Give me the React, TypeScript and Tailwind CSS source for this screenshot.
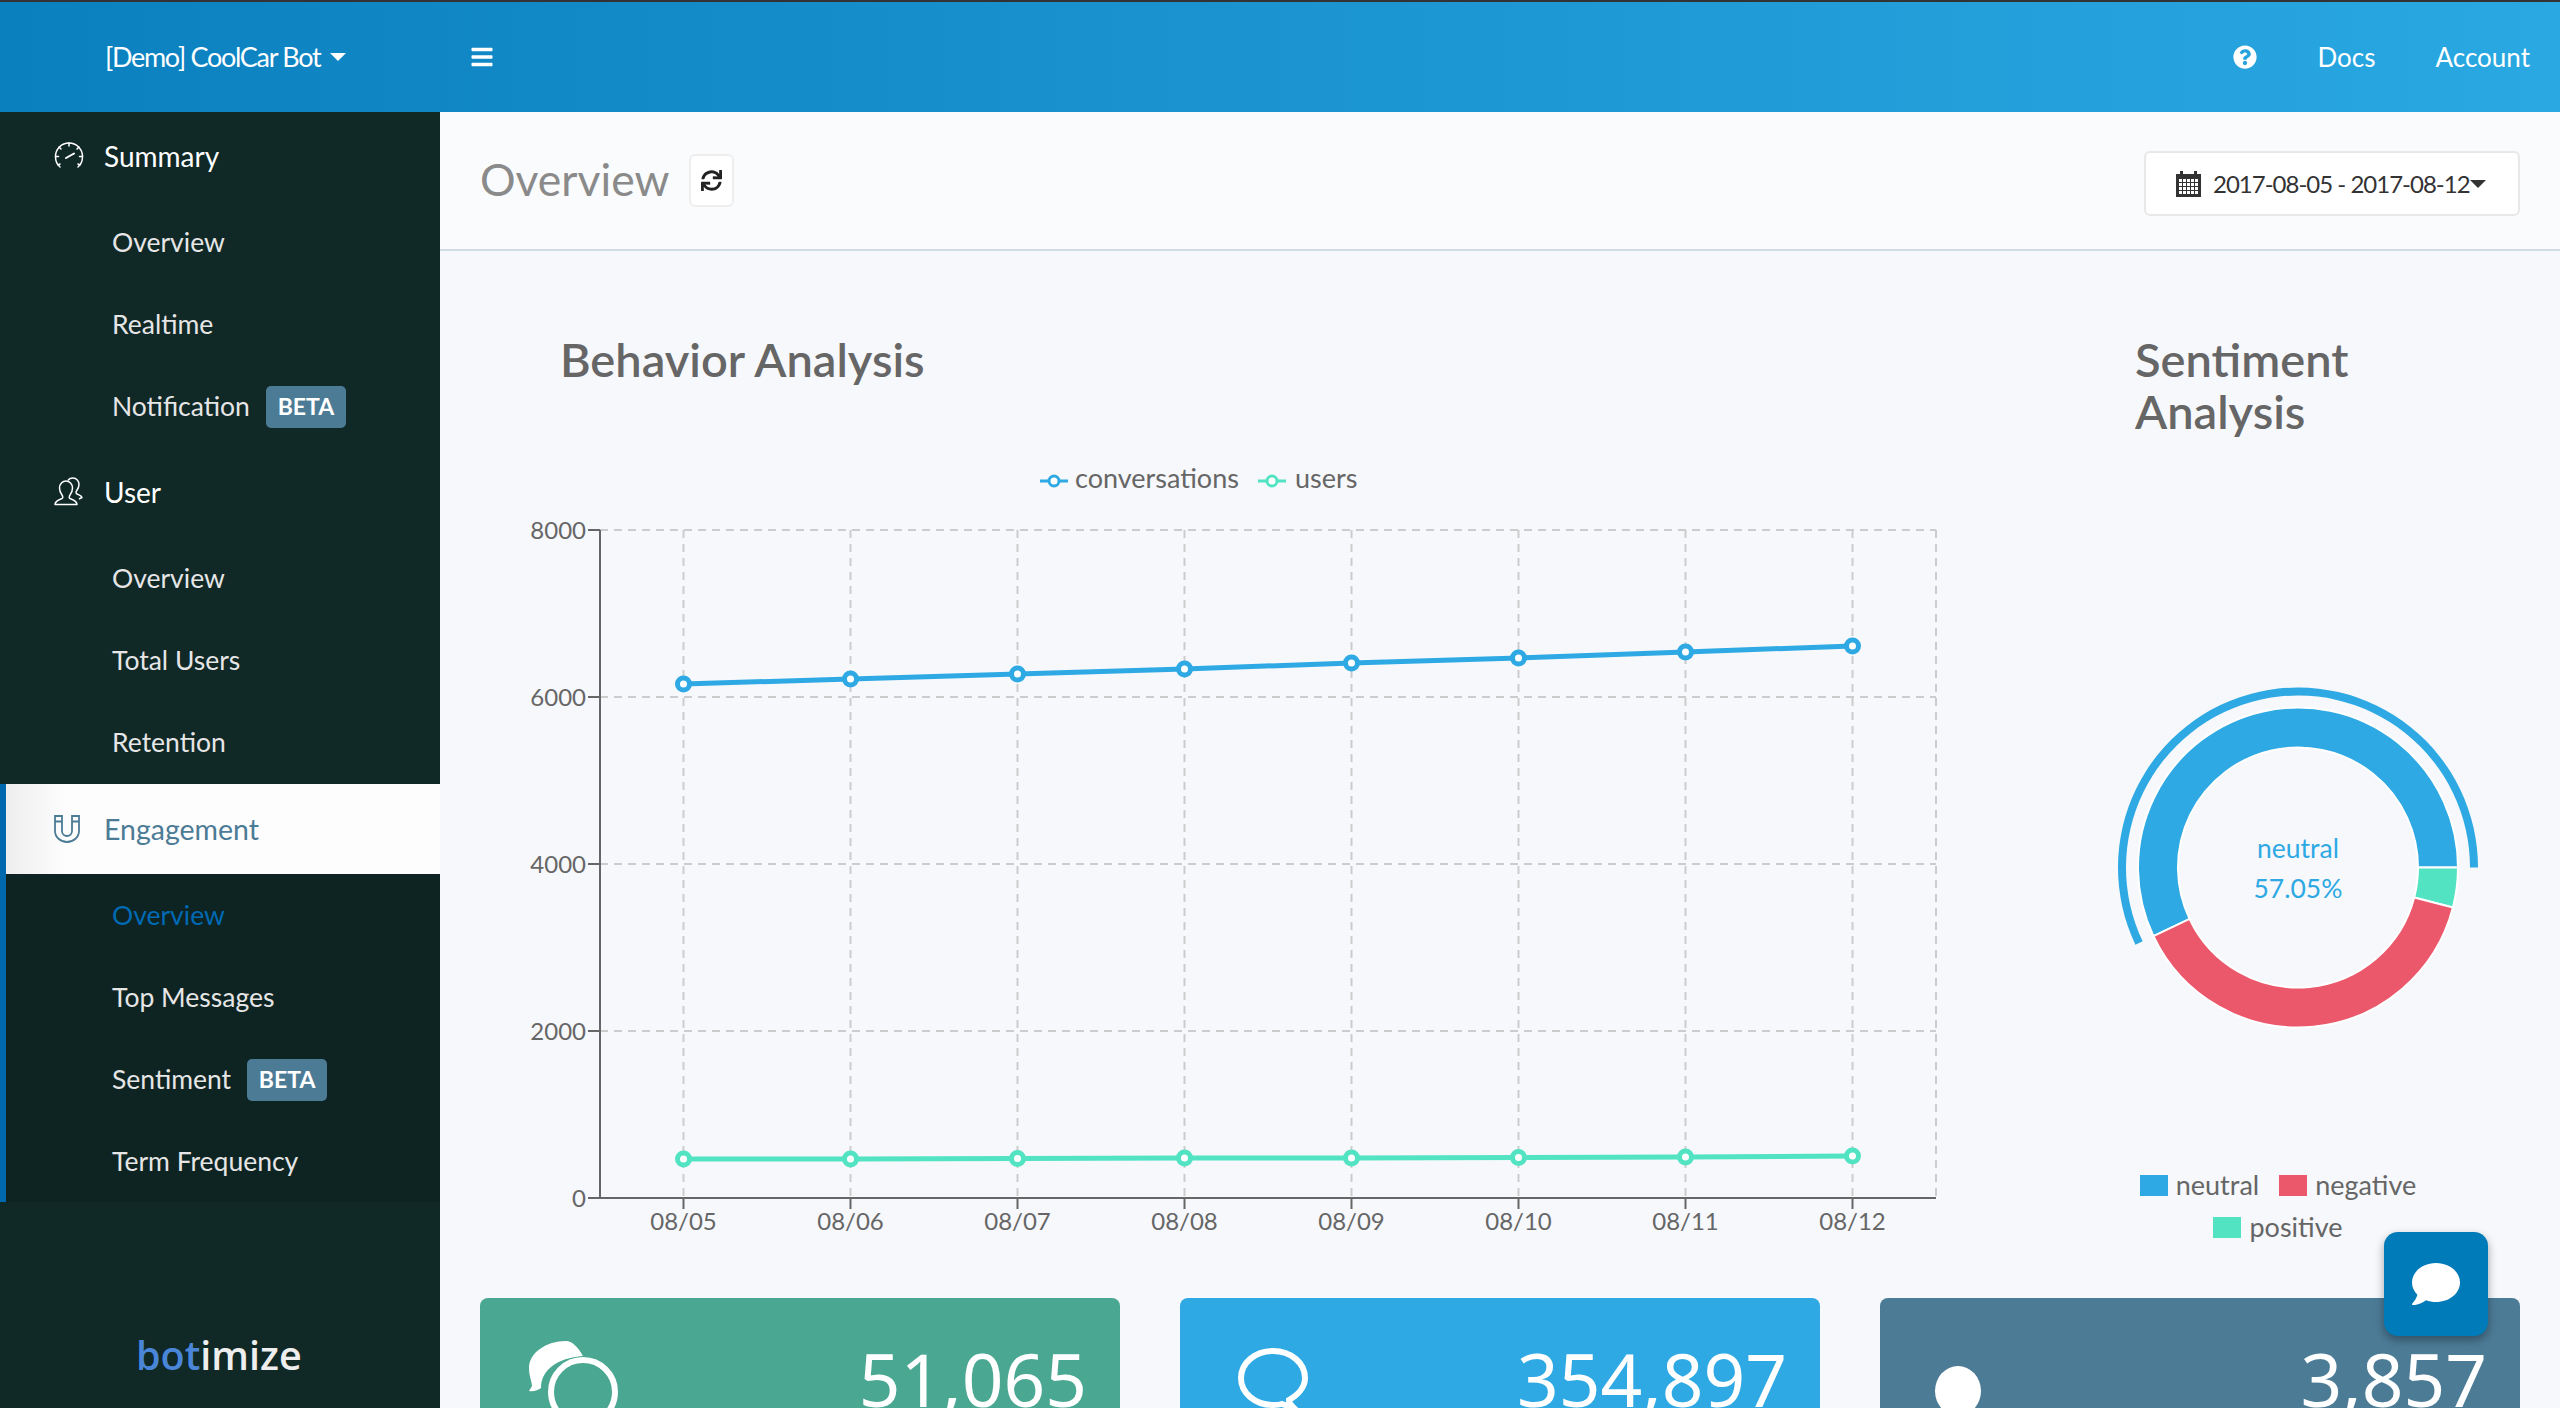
import React from 'react';
import { FaBars, FaComment, FaQuestionCircle, FaSync } from 'react-icons/fa';

const Caret = ({ className }: { className: string }) => (
  <svg viewBox="0 0 16 8" className={className} fill="currentColor">
    <path d="M0 0h16L8 8z" />
  </svg>
);

const GaugeIcon = () => (
  <svg viewBox="0 0 30 30" className="h-[30px] w-[30px] shrink-0" fill="none" stroke="#fff" strokeWidth="1.5" strokeLinecap="round">
    <path d="M6 26C3 23.500 1.500 19.500 1.500 15.500 1.500 8 7.500 2 15 2s13.500 6 13.500 13.500c0 4-1.500 8-4.500 10.500" />
    <path d="M12 17l8-4.500" strokeWidth="2" />
    <path d="M15 2v3M5 6l2 2M25 6l-2 2M1.500 15.500h3M28.500 15.500h-3M4 24l2-1M26 24l-2-1" />
  </svg>
);

const UserIcon = () => (
  <svg viewBox="0 0 30 30" className="h-[30px] w-[30px] shrink-0" fill="none" stroke="#fff" strokeWidth="1.500" strokeLinejoin="round">
    <path d="M1 27.500c0-3 3-4.500 7-6 1-.4 1-2 0-3.500-2-2.500-2.500-4-2.500-7 0-4 3-7 6.500-7s6.500 3 6.500 7c0 3-.5 4.500-2.500 7-1 1.500-1 3.100 0 3.500 4 1.500 7 3 7 6z" />
    <path d="M14 3.500C15 1.500 17 1 19 1c3.500 0 6 3 6 6.500 0 3-1 4.500-2.500 6.500-.8 1.200-.5 2.500.5 3 2 1 4.500 1.500 5 3.500l-3 1.500" />
  </svg>
);

const MagnetIcon = () => (
  <svg viewBox="0 0 26 28" className="h-[28px] w-[26px] shrink-0" fill="none" stroke="#4c7b96" strokeWidth="1.800">
    <path d="M1 1h7v15a5 5 0 0 0 10 0V1h7v15a12 11 0 0 1-24 0z" />
    <path d="M1 6.500h7M18 6.500h7" />
  </svg>
);

const CalendarIcon = () => (
  <svg viewBox="0 0 25 26" className="h-[26px] w-[25px] shrink-0" fill="#333">
    <path d="M0 3h4V0h3v3h11V0h3v3h4v23H0z" />
    {[8, 12, 16, 20].map(y =>
      [3, 7, 11, 15, 19].map(x => <rect key={`${x}-${y}`} x={x} y={y} width="3" height="3" fill="#fff" />)
    )}
  </svg>
);

const Beta = () => (
  <span className="ml-4 flex h-[42px] w-[80px] items-center justify-center rounded-[5px] bg-[#4c7b96] text-[23px] font-bold text-white">
    BETA
  </span>
);

const SubItem = ({ label, beta, active }: { label: string; beta?: boolean; active?: boolean }) => (
  <div className={`flex h-[82px] items-center pl-[112px] pt-px text-[26.5px] ${active ? 'text-[#0069b4]' : 'text-[#e6e6e6]'}`}>
    {label}
    {beta && <Beta />}
  </div>
);

const Section = ({ icon, label }: { icon: React.ReactNode; label: string }) => (
  <div className="flex h-[88px] items-center gap-[20px] pl-[54px] text-[28px] text-white">
    {icon}
    {label}
  </div>
);

const Sidebar = () => (
  <aside className="flex w-[440px] shrink-0 flex-col bg-[#102826]">
    <Section icon={<GaugeIcon />} label="Summary" />
    <div className="py-px">
      <SubItem label="Overview" />
      <SubItem label="Realtime" />
      <SubItem label="Notification" beta />
    </div>
    <Section icon={<UserIcon />} label="User" />
    <div className="py-px">
      <SubItem label="Overview" />
      <SubItem label="Total Users" />
      <SubItem label="Retention" />
    </div>
    <div className="border-l-[6px] border-[#0069ad] bg-[#0e2423]">
      <div className="flex h-[90px] items-center gap-[24px] bg-gradient-to-r from-[#eeeeee] to-[#fdfdfd] to-[14%] pl-[48px] text-[28.5px] text-[#4c7b96]">
        <MagnetIcon />
        Engagement
      </div>
      <div className="-ml-[6px]">
        <SubItem label="Overview" active />
        <SubItem label="Top Messages" />
        <SubItem label="Sentiment" beta />
        <SubItem label="Term Frequency" />
      </div>
    </div>
    <div className="mt-[123px] pl-[136px] font-['Open_Sans',sans-serif] text-[39.5px] font-semibold leading-[60px] text-[#eeeeee]">
      <span className="text-[#4a86d8]">bot</span>imize
    </div>
  </aside>
);

const TopBar = () => (
  <header className="flex h-[112px] shrink-0 items-center border-t-2 border-[#333] bg-gradient-to-r from-[#0a80bf] to-[#29a8e2] text-[26px] text-white">
    <div className="flex w-[470px] items-center pl-[105px] text-[27px] tracking-[-1.3px]">
      [Demo] CoolCar Bot
      <Caret className="ml-[10px] h-[8px] w-[16px]" />
    </div>
    <FaBars className="h-[24px] w-[24px]" />
    <div className="ml-auto flex items-center pr-[30px]">
      <FaQuestionCircle className="mr-[60px] h-[24px] w-[24px]" />
      <span className="mr-[60px]">Docs</span>
      <span>Account</span>
    </div>
  </header>
);

const days = ['08/05', '08/06', '08/07', '08/08', '08/09', '08/10', '08/11', '08/12'];
const xAt = (i: number) => 203.500 + i * 167;
const convY = [244, 239, 234, 229, 223, 218, 212, 206];
const userY = [719, 719, 718.500, 718, 718, 717.500, 717, 716];

const Series = ({ ys, color }: { ys: number[]; color: string }) => (
  <g>
    <polyline points={ys.map((y, i) => `${xAt(i)},${y}`).join(' ')} fill="none" stroke={color} strokeWidth="5" />
    {ys.map((y, i) => (
      <circle key={i} cx={xAt(i)} cy={y} r="6" fill="#fff" stroke={color} strokeWidth="5" />
    ))}
  </g>
);

// axis: x 600 -> svg 120, y 530/1198 -> svg 90/758
const LineChart = () => (
  <svg width="1480" height="800" className="block">
    <g stroke="#cccccc" strokeWidth="2" strokeDasharray="8 6">
      {[90, 257, 424, 591].map(y => <line key={y} x1="120" x2="1456" y1={y} y2={y} />)}
      {days.map((d, i) => <line key={d} x1={xAt(i)} x2={xAt(i)} y1="90" y2="758" />)}
      <line x1="1456" x2="1456" y1="90" y2="758" />
    </g>
    <g stroke="#666" strokeWidth="2">
      <line x1="108" x2="120" y1="90" y2="90" />
      <line x1="108" x2="120" y1="257" y2="257" />
      <line x1="108" x2="120" y1="424" y2="424" />
      <line x1="108" x2="120" y1="591" y2="591" />
      <line x1="108" x2="120" y1="758" y2="758" />
      <line x1="120" x2="120" y1="90" y2="758" />
      <line x1="120" x2="1456" y1="758" y2="758" />
      {days.map((d, i) => <line key={d} x1={xAt(i)} x2={xAt(i)} y1="758" y2="769" />)}
    </g>
    <g fill="#666" fontSize="24" textAnchor="end">
      {[['8000', 90], ['6000', 257], ['4000', 424], ['2000', 591], ['0', 758]].map(([t, y]) => (
        <text key={t} x="106" y={Number(y) + 9}>{t}</text>
      ))}
    </g>
    <g fill="#666" fontSize="24" textAnchor="middle">
      {days.map((d, i) => <text key={d} x={xAt(i)} y="790">{d}</text>)}
    </g>
    <Series ys={convY} color="#2ea9e3" />
    <Series ys={userY} color="#52e3c2" />
    <g>
      <line x1="560" x2="588" y1="41" y2="41" stroke="#2ea9e3" strokeWidth="3" />
      <circle cx="574" cy="41" r="5" fill="#fff" stroke="#2ea9e3" strokeWidth="3" />
      <text x="595" y="48" fill="#666" fontSize="27">conversations</text>
      <line x1="778" x2="806" y1="41" y2="41" stroke="#52e3c2" strokeWidth="3" />
      <circle cx="792" cy="41" r="5" fill="#fff" stroke="#52e3c2" strokeWidth="3" />
      <text x="815" y="48" fill="#666" fontSize="27">users</text>
    </g>
  </svg>
);

const CX = 178;
const CY = 207.500;

const ringPath = (r0: number, r1: number, a0: number, a1: number) => {
  const p = (r: number, a: number) => {
    const t = (a * Math.PI) / 180;
    return `${(CX + r * Math.cos(t)).toFixed(2)} ${(CY + r * Math.sin(t)).toFixed(2)}`;
  };
  const large = Math.abs(a1 - a0) > 180 ? 1 : 0;
  const sweep = a1 > a0 ? 1 : 0;
  return `M${p(r1, a0)}A${r1} ${r1} 0 ${large} ${sweep} ${p(r1, a1)}L${p(r0, a1)}A${r0} ${r0} 0 ${large} ${1 - sweep} ${p(r0, a0)}Z`;
};

const Donut = () => (
  <svg width="400" height="400" className="block overflow-visible">
    <path d={ringPath(172, 180, 0, -205.4)} fill="#2ea9e3" />
    <g stroke="#ffffff" strokeWidth="2">
      <path d={ringPath(120, 160, 0, -205.4)} fill="#2ea9e3" />
      <path d={ringPath(120, 160, 0, 14.5)} fill="#52e3c2" />
      <path d={ringPath(120, 160, 14.5, 154.6)} fill="#ec586b" />
    </g>
    <g fill="#2ea9e3" fontSize="26.5" textAnchor="middle">
      <text x={CX} y="198">neutral</text>
      <text x={CX} y="238">57.05%</text>
    </g>
  </svg>
);

const LegendItem = ({ swatch, label }: { swatch: string; label: string }) => (
  <div className="flex h-[42px] items-center gap-2 text-[27px] text-[#666]">
    <span className={`h-[21px] w-[28px] ${swatch}`} />
    {label}
  </div>
);

const StatCard = ({ bg, value, icon }: { bg: string; value: string; icon: React.ReactNode }) => (
  <div className={`flex h-[200px] flex-1 justify-between rounded-[8px] pr-[33px] text-white ${bg}`}>
    {icon}
    <div className="pt-[45px] font-['Noto_Sans',sans-serif] text-[73px] font-normal leading-[72px]">{value}</div>
  </div>
);

const App: React.FC = () => {
  return (
    <div className="flex h-[1408px] flex-col overflow-hidden bg-[#f6f8fc] font-['Lato',sans-serif]">
      <TopBar />
      <div className="flex min-h-0 flex-1">
        <Sidebar />
        <main className="min-w-0 flex-1">
          <div className="flex h-[139px] items-center border-b-2 border-[#d0dce6] bg-[#fafbfd] px-[40px]">
            <h1 className="-mt-[2px] w-[186px] whitespace-nowrap text-[44.5px] text-[#8a8a8a]">Overview</h1>
            <button className="ml-[23px] flex h-[53px] w-[45px] items-center justify-center rounded-[6px] border-2 border-[#eeeeee] bg-white">
              <FaSync className="h-[21px] w-[21px] text-[#222]" />
            </button>
            <button className="ml-auto mt-[6px] flex h-[65px] w-[376px] items-center whitespace-nowrap rounded-[6px] border-2 border-[#e8e8e8] bg-white pl-[30px] text-[24px] tracking-[-1px] text-[#333]">
              <CalendarIcon />
              <span className="ml-[12px]">2017-08-05 - 2017-08-12</span>
              <Caret className="h-[8px] w-[16px]" />
            </button>
          </div>
          <div className="flex h-[1047px] px-[40px]">
            <section className="w-[1640px] pt-[82px]">
              <h2 className="pl-[80px] text-[47px] font-semibold leading-[52px] text-[#666]">Behavior Analysis</h2>
              <div className="mt-[55px]">
                <LineChart />
              </div>
            </section>
            <section className="pt-[82px]">
              <h2 className="pl-[15px] text-[47px] font-semibold leading-[52px] text-[#666]">
                Sentiment
                <br />
                Analysis
              </h2>
              <div className="mt-[223px]">
                <Donut />
              </div>
              <div className="mt-[104px] flex w-[316px] flex-wrap justify-center gap-x-[20px]">
                <LegendItem swatch="bg-[#2ea9e3]" label="neutral" />
                <LegendItem swatch="bg-[#ec586b]" label="negative" />
                <LegendItem swatch="bg-[#52e3c2]" label="positive" />
              </div>
            </section>
          </div>
          <div className="flex gap-[60px] px-[40px]">
            <StatCard
              bg="bg-[#4aa791]"
              value="51,065"
              icon={
                <svg viewBox="0 0 100 110" className="ml-[48px] mt-[42px] h-[110px] w-[100px]" fill="none">
                  <path d="M38 1C18 1 1 13 1 28c0 8 3 14 3 18l-3 5c5 1 9-1 12-3 0-18 16-30 42-32C50 7 44 1 38 1z" fill="#fff" />
                  <circle cx="55" cy="52" r="32" stroke="#fff" strokeWidth="6" />
                </svg>
              }
            />
            <StatCard
              bg="bg-[#2ea9e3]"
              value="354,897"
              icon={
                <svg viewBox="0 0 80 80" className="ml-[58px] mt-[50px] h-[80px] w-[80px]" fill="none" stroke="#fff" strokeWidth="6">
                  <path d="M35 3C17 3 3 15 3 30s14 27 32 27c3 0 6 0 9-1 3 1 6 2 10 2-2-2-3-4-3-6 9-5 16-13 16-22C67 15 53 3 35 3z" />
                </svg>
              }
            />
            <StatCard
              bg="bg-[#4c7b96]"
              value="3,857"
              icon={
                <svg viewBox="0 0 60 60" className="ml-[55px] mt-[68px] h-[60px] w-[60px]" fill="#fff">
                  <ellipse cx="23" cy="25" rx="23" ry="25" />
                </svg>
              }
            />
          </div>
        </main>
      </div>
      <button className="absolute left-[2384px] top-[1232px] flex h-[104px] w-[104px] items-center justify-center rounded-[14px] bg-[#007bb9] text-white shadow-[0_4px_10px_rgba(0,0,0,0.35)]">
        <FaComment className="h-[48px] w-[48px]" />
      </button>
    </div>
  );
};

export default App;
